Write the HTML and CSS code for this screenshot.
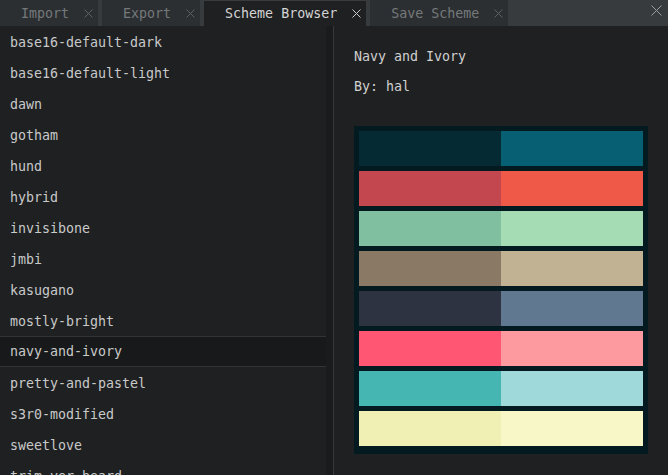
FILE: index.html
```html
<!DOCTYPE html>
<html>
<head>
<meta charset="utf-8">
<link rel="stylesheet" href="styles.css">
</head>
<body>
<div class="tabbar">
  <div class="tab"><span class="label">Import</span><svg class="x" viewBox="0 0 9 9"><path d="M0.5 0.5L8.5 8.5M8.5 0.5L0.5 8.5"/></svg></div>
  <div class="tab"><span class="label">Export</span><svg class="x" viewBox="0 0 9 9"><path d="M0.5 0.5L8.5 8.5M8.5 0.5L0.5 8.5"/></svg></div>
  <div class="tab active"><span class="label">Scheme Browser</span><svg class="x" viewBox="0 0 9 9"><path d="M0.5 0.5L8.5 8.5M8.5 0.5L0.5 8.5"/></svg></div>
  <div class="tab"><span class="label">Save Scheme</span><svg class="x" viewBox="0 0 9 9"><path d="M0.5 0.5L8.5 8.5M8.5 0.5L0.5 8.5"/></svg></div>
  <div class="spacer"></div>
  <svg class="close" viewBox="0 0 11 11"><path d="M0.5 0.5L10.5 10.5M10.5 0.5L0.5 10.5"/></svg>
</div>
<div class="main">
  <div class="left">
    <ul class="list">
      <li>base16-default-dark</li>
      <li>base16-default-light</li>
      <li>dawn</li>
      <li>gotham</li>
      <li>hund</li>
      <li>hybrid</li>
      <li>invisibone</li>
      <li>jmbi</li>
      <li>kasugano</li>
      <li>mostly-bright</li>
      <li class="selected">navy-and-ivory</li>
      <li>pretty-and-pastel</li>
      <li>s3r0-modified</li>
      <li>sweetlove</li>
      <li>trim-yer-beard</li>
    </ul>
    <div class="scrollbar"></div>
  </div>
  <div class="right">
    <div class="title">Navy and Ivory</div>
    <div class="author">By: hal</div>
    <div class="palette">
      <div class="sw" style="background:#052a34"></div><div class="sw" style="background:#075f73"></div>
      <div class="sw" style="background:#c2474f"></div><div class="sw" style="background:#ef5a48"></div>
      <div class="sw" style="background:#80c0a0"></div><div class="sw" style="background:#a5dcb4"></div>
      <div class="sw" style="background:#8a7a65"></div><div class="sw" style="background:#c1b294"></div>
      <div class="sw" style="background:#2d3340"></div><div class="sw" style="background:#617891"></div>
      <div class="sw" style="background:#fe5673"></div><div class="sw" style="background:#fd9aa0"></div>
      <div class="sw" style="background:#46b6b3"></div><div class="sw" style="background:#a0d9da"></div>
      <div class="sw" style="background:#f1f0b4"></div><div class="sw" style="background:#f8f7c8"></div>
    </div>
  </div>
</div>
</body>
</html>
```

FILE: styles.css
```css
html, body {
  margin: 0;
  padding: 0;
  background: #1f2022;
  height: 100%;
  overflow: hidden;
}
body {
  font-family: "DejaVu Sans Mono", "Liberation Mono", monospace;
  font-size: 13.3px;
  color: #c8c9c9;
}
.tabbar {
  display: flex;
  align-items: stretch;
  height: 26px;
  background: #373b3e;
  gap: 4px;
}
.tab {
  display: flex;
  align-items: center;
  gap: 15px;
  padding: 0 5px 0 21px;
  background: #2c2f31;
  color: #75797c;
}
.tab .x {
  width: 9px;
  height: 9px;
  stroke: #5d6164;
  stroke-width: 1;
  fill: none;
}
.tab.active {
  background: #1f2022;
  color: #d4d4d4;
  margin-top: 1px;
}
.tab.active .x {
  stroke: #c8c8c8;
}
.spacer {
  flex: 1;
}
.close {
  width: 11px;
  height: 11px;
  margin: 5px 6px 0 0;
  stroke: #9a9da0;
  stroke-width: 1;
  fill: none;
}
.main {
  display: flex;
  height: 449px;
}
.left {
  display: flex;
  width: 333px;
  border-right: 1px solid #38393b;
  overflow: hidden;
}
.list {
  list-style: none;
  margin: 0;
  padding: 0;
  width: 326px;
}
.list li {
  height: 31px;
  padding: 2px 0 0 10px;
  line-height: 29px;
  box-sizing: border-box;
  white-space: nowrap;
}
.list li.selected {
  background: #18191a;
  border-top: 1px solid #323335;
  border-bottom: 1px solid #323335;
  padding-top: 1px;
  line-height: 28px;
}
.scrollbar {
  width: 7px;
  background: #1a1b1c;
}
.right {
  flex: 1;
  padding: 16px 0 0 20px;
}
.title, .author {
  height: 30px;
  line-height: 30px;
  color: #cfd0d0;
}
.palette {
  margin-top: 24px;
  width: 294px;
  box-sizing: border-box;
  padding: 5px 5px 8px 5px;
  background: #031a20;
  display: grid;
  grid-template-columns: 1fr 1fr;
  grid-auto-rows: 35px;
  row-gap: 5px;
}
```
